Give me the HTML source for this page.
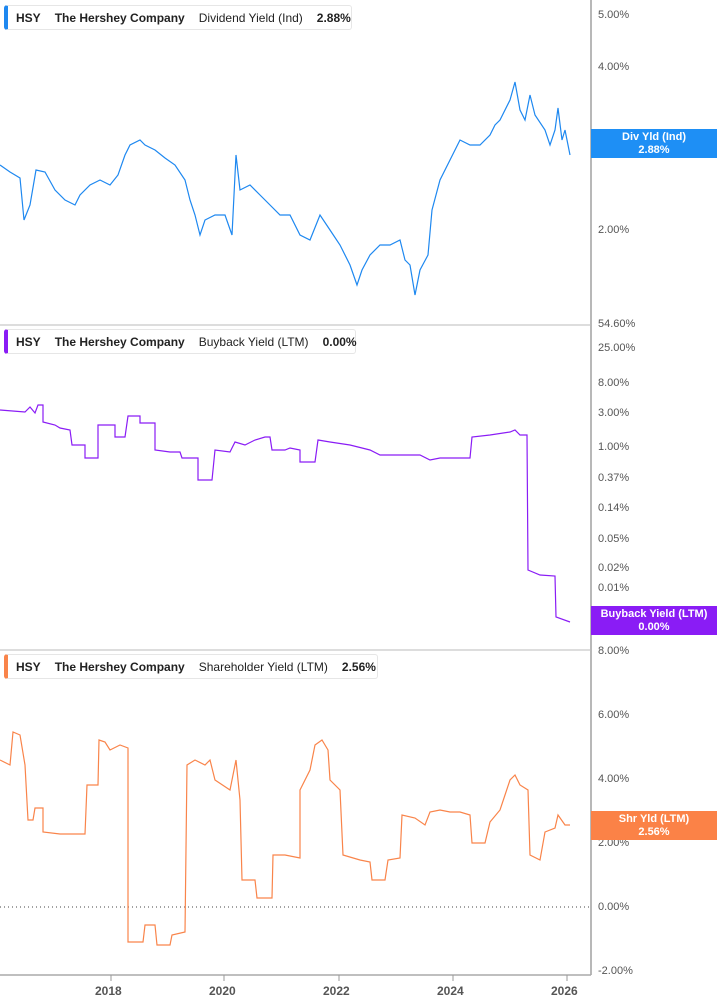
<!DOCTYPE html>
<html><head><meta charset="utf-8"><style>
body{margin:0;width:717px;height:1005px;background:#fff;font-family:"Liberation Sans",sans-serif;overflow:hidden;position:relative}
svg{position:absolute;left:0;top:0}
.leg{position:absolute;left:4px;height:25px;border:1px solid #e6e6e6;border-left:4px solid;border-radius:3px;background:#fff;font-size:12px;font-weight:bold;color:#222;line-height:25px;padding-left:8px;box-sizing:border-box;white-space:nowrap}
.leg span{margin-right:14px}
.leg .n{font-weight:normal}
.lab{position:absolute;left:591px;width:126px;color:#fff;font-size:11px;font-weight:bold;text-align:center;line-height:13px;padding-top:2px;box-sizing:border-box}
.y{position:absolute;left:598px;font-size:11px;color:#555}
.x{position:absolute;top:984px;font-size:12px;font-weight:bold;color:#555}
</style></head><body>
<svg width="717" height="1005">
<line x1="591" y1="0" x2="591" y2="975" stroke="#888" stroke-width="1.2"/>
<line x1="0" y1="325" x2="591" y2="325" stroke="#bbb"/>
<line x1="0" y1="650" x2="591" y2="650" stroke="#bbb"/>
<line x1="0" y1="975" x2="591" y2="975" stroke="#aaa" stroke-width="1.5"/>
<g stroke="#999"><line x1="111" y1="975" x2="111" y2="981"/><line x1="224" y1="975" x2="224" y2="981"/><line x1="339" y1="975" x2="339" y2="981"/><line x1="453" y1="975" x2="453" y2="981"/><line x1="567" y1="975" x2="567" y2="981"/></g>
<line x1="0" y1="907" x2="591" y2="907" stroke="#444" stroke-dasharray="1,3"/>
<polyline fill="none" stroke="#1e88f0" stroke-width="1.2" points="0,165 10,172 20,178 24,220 30,205 36,170 45,172 55,190 65,200 75,205 80,195 90,185 100,180 110,185 118,175 125,155 130,145 140,140 145,145 155,150 165,158 175,165 185,180 190,200 195,215 200,235 205,220 215,215 225,215 232,235 236,155 240,190 250,185 260,195 270,205 280,215 290,215 300,235 310,240 320,215 330,230 340,245 350,265 357,285 362,270 370,255 380,245 390,245 400,240 405,260 410,265 415,295 420,270 428,255 432,210 440,180 450,160 460,140 470,145 480,145 490,135 495,125 500,120 510,100 515,82 520,110 525,120 530,95 535,115 545,130 550,145 555,130 558,108 562,140 565,130 570,155"/>
<polyline fill="none" stroke="#8a1cf5" stroke-width="1.2" points="0,410 25,412 30,407 35,413 38,405 43,405 43,422 55,425 60,428 70,430 72,445 85,445 85,458 98,458 98,425 115,425 115,437 125,437 128,416 140,416 140,423 155,423 155,450 170,452 180,452 182,458 198,458 198,480 212,480 215,450 230,452 235,442 245,445 255,440 265,437 270,437 272,450 285,450 290,448 300,450 300,462 315,462 318,440 330,442 350,445 370,450 380,455 400,455 420,455 430,460 440,458 470,458 472,437 490,435 510,432 515,430 520,435 527,435 528,570 540,575 555,576 556,617 570,622"/>
<polyline fill="none" stroke="#f9844a" stroke-width="1.2" points="0,760 10,765 13,732 20,735 25,765 28,820 33,820 35,808 43,808 43,832 60,834 85,834 87,785 98,785 99,740 105,742 110,750 120,745 128,748 128,942 143,942 145,925 155,925 157,945 170,945 172,935 185,932 187,765 195,760 205,765 210,760 215,780 230,790 236,760 240,800 242,880 255,880 257,898 272,898 273,855 285,855 300,858 300,790 310,770 315,745 322,740 328,750 330,780 340,790 343,855 360,860 370,862 372,880 385,880 388,860 400,858 402,815 415,818 425,825 430,812 440,810 450,812 460,812 470,815 472,843 485,843 490,822 500,810 505,795 510,780 515,775 520,785 528,790 530,855 540,860 545,832 555,828 558,815 565,825 570,825"/>
</svg>
<div class="leg" style="top:5px;width:348px;border-left-color:#1e88f0"><span>HSY</span><span>The Hershey Company</span><span class="n">Dividend Yield (Ind)</span>2.88%</div>
<div class="leg" style="top:329px;width:352px;border-left-color:#8a1cf5"><span>HSY</span><span>The Hershey Company</span><span class="n">Buyback Yield (LTM)</span>0.00%</div>
<div class="leg" style="top:654px;width:374px;border-left-color:#f9844a"><span>HSY</span><span>The Hershey Company</span><span class="n">Shareholder Yield (LTM)</span>2.56%</div>
<div class="y" style="top:9px">5.00%</div>
<div class="y" style="top:61px">4.00%</div>
<div class="y" style="top:224px">2.00%</div>
<div class="y" style="top:318px">54.60%</div>
<div class="y" style="top:342px">25.00%</div>
<div class="y" style="top:377px">8.00%</div>
<div class="y" style="top:407px">3.00%</div>
<div class="y" style="top:441px">1.00%</div>
<div class="y" style="top:472px">0.37%</div>
<div class="y" style="top:502px">0.14%</div>
<div class="y" style="top:533px">0.05%</div>
<div class="y" style="top:562px">0.02%</div>
<div class="y" style="top:582px">0.01%</div>
<div class="y" style="top:645px">8.00%</div>
<div class="y" style="top:709px">6.00%</div>
<div class="y" style="top:773px">4.00%</div>
<div class="y" style="top:837px">2.00%</div>
<div class="y" style="top:901px">0.00%</div>
<div class="y" style="top:965px">-2.00%</div>
<div class="lab" style="top:129px;height:29px;background:#1e8ff5">Div Yld (Ind)<br>2.88%</div>
<div class="lab" style="top:606px;height:29px;background:#8a1cf5">Buyback Yield (LTM)<br>0.00%</div>
<div class="lab" style="top:811px;height:29px;background:#fb8247">Shr Yld (LTM)<br>2.56%</div>
<div class="x" style="left:95px">2018</div>
<div class="x" style="left:209px">2020</div>
<div class="x" style="left:323px">2022</div>
<div class="x" style="left:437px">2024</div>
<div class="x" style="left:551px">2026</div>
</body></html>
